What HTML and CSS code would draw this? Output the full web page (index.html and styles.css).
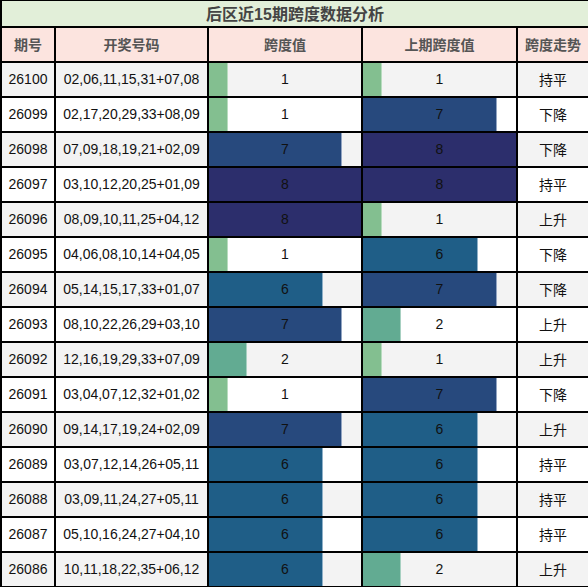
FILE: index.html
```html
<html>
    <head>
        <meta charset="utf-8">
        <link rel="stylesheet" href="styles.css">

        <script>
            window.addEventListener("DOMContentLoaded",function(){
                let rows = [
                  ["26100","02,06,11,15,31+07,08",1,1,"持平"],
                  ["26099","02,17,20,29,33+08,09",1,7,"下降"],
                  ["26098","07,09,18,19,21+02,09",7,8,"下降"],
                  ["26097","03,10,12,20,25+01,09",8,8,"持平"],
                  ["26096","08,09,10,11,25+04,12",8,1,"上升"],
                  ["26095","04,06,08,10,14+04,05",1,6,"下降"],
                  ["26094","05,14,15,17,33+01,07",6,7,"下降"],
                  ["26093","08,10,22,26,29+03,10",7,2,"上升"],
                  ["26092","12,16,19,29,33+07,09",2,1,"上升"],
                  ["26091","03,04,07,12,32+01,02",1,7,"下降"],
                  ["26090","09,14,17,19,24+02,09",7,6,"上升"],
                  ["26089","03,07,12,14,26+05,11",6,6,"持平"],
                  ["26088","03,09,11,24,27+05,11",6,6,"持平"],
                  ["26087","05,10,16,24,27+04,10",6,6,"持平"],
                  ["26086","10,11,18,22,35+06,12",6,2,"上升"]
                ];
                const max = 8;
                let body = document.getElementById("rows");

                function bar(v){
                  let td = document.createElement("td");
                  td.className = "bar v" + v;
                  td.style.setProperty("--w", (v/max*100) + "%");
                  td.innerText = v;
                  return td;
                }

                for(let i=0; i<rows.length; i++){
                  let r = rows[i];
                  let tr = document.createElement("tr");
                  let a = document.createElement("td");
                  a.innerText = r[0];
                  let b = document.createElement("td");
                  b.innerText = r[1];
                  let e = document.createElement("td");
                  e.className = "trend";
                  e.innerText = r[4];
                  tr.appendChild(a);
                  tr.appendChild(b);
                  tr.appendChild(bar(r[2]));
                  tr.appendChild(bar(r[3]));
                  tr.appendChild(e);
                  body.appendChild(tr);
                }
            });
        </script>
    </head>
    <body>
        <table class="sheet">
            <colgroup>
                <col class="c-no">
                <col class="c-nums">
                <col class="c-span">
                <col class="c-prev">
                <col class="c-trend">
            </colgroup>
            <thead>
                <tr class="title">
                    <th colspan="5">后区近15期跨度数据分析</th>
                </tr>
                <tr class="head">
                    <th>期号</th>
                    <th>开奖号码</th>
                    <th>跨度值</th>
                    <th>上期跨度值</th>
                    <th>跨度走势</th>
                </tr>
            </thead>
            <tbody id="rows"></tbody>
        </table>
    </body>
</html>
```

FILE: styles.css
```css
*{
  margin:0px;
  box-sizing:border-box;
}

body{
  background:#fff;
  font-family:"Liberation Sans", "Noto Sans CJK SC", sans-serif;
}

.sheet{
  width:588px;
  table-layout:fixed;
  border-collapse:collapse;
  border:1px solid #000;
}

.c-no{ width:54px; }
.c-nums{ width:153px; }
.c-span{ width:154px; }
.c-prev{ width:155px; }
.c-trend{ width:72px; }

.sheet th,
.sheet td{
  border:2px solid #000;
  padding:0px;
  text-align:center;
  font-size:14px;
  color:#111;
}

.title th{
  height:26px;
  background:#e2efd9;
  color:#444;
  font-size:16px;
  font-weight:700;
  border-top:1px solid #000;
}

.head th{
  height:35px;
  background:#fce4df;
  color:#555;
  font-size:14px;
  font-weight:700;
}

.sheet td{
  height:35px;
}

#rows tr:nth-child(odd){
  background:#f3f3f3;
}

#rows tr:nth-child(even){
  background:#fff;
}

.trend{
  font-family:"Noto Sans CJK SC", sans-serif;
}

.bar{
  background-image:linear-gradient(to right,
    var(--c) calc(var(--w) - 1px),
    var(--e) calc(var(--w) - 1px),
    var(--e) var(--w),
    transparent var(--w));
}

.v1{ --c:#83bf90; --e:#b8dcbf; }
.v2{ --c:#62ab92; --e:#a7d0c1; }
.v6{ --c:#1f5e87; --e:#8fb0c8; }
.v7{ --c:#27497d; --e:#93a5c2; }
.v8{ --c:#2c2e6c; --e:#2c2e6c; }
```
